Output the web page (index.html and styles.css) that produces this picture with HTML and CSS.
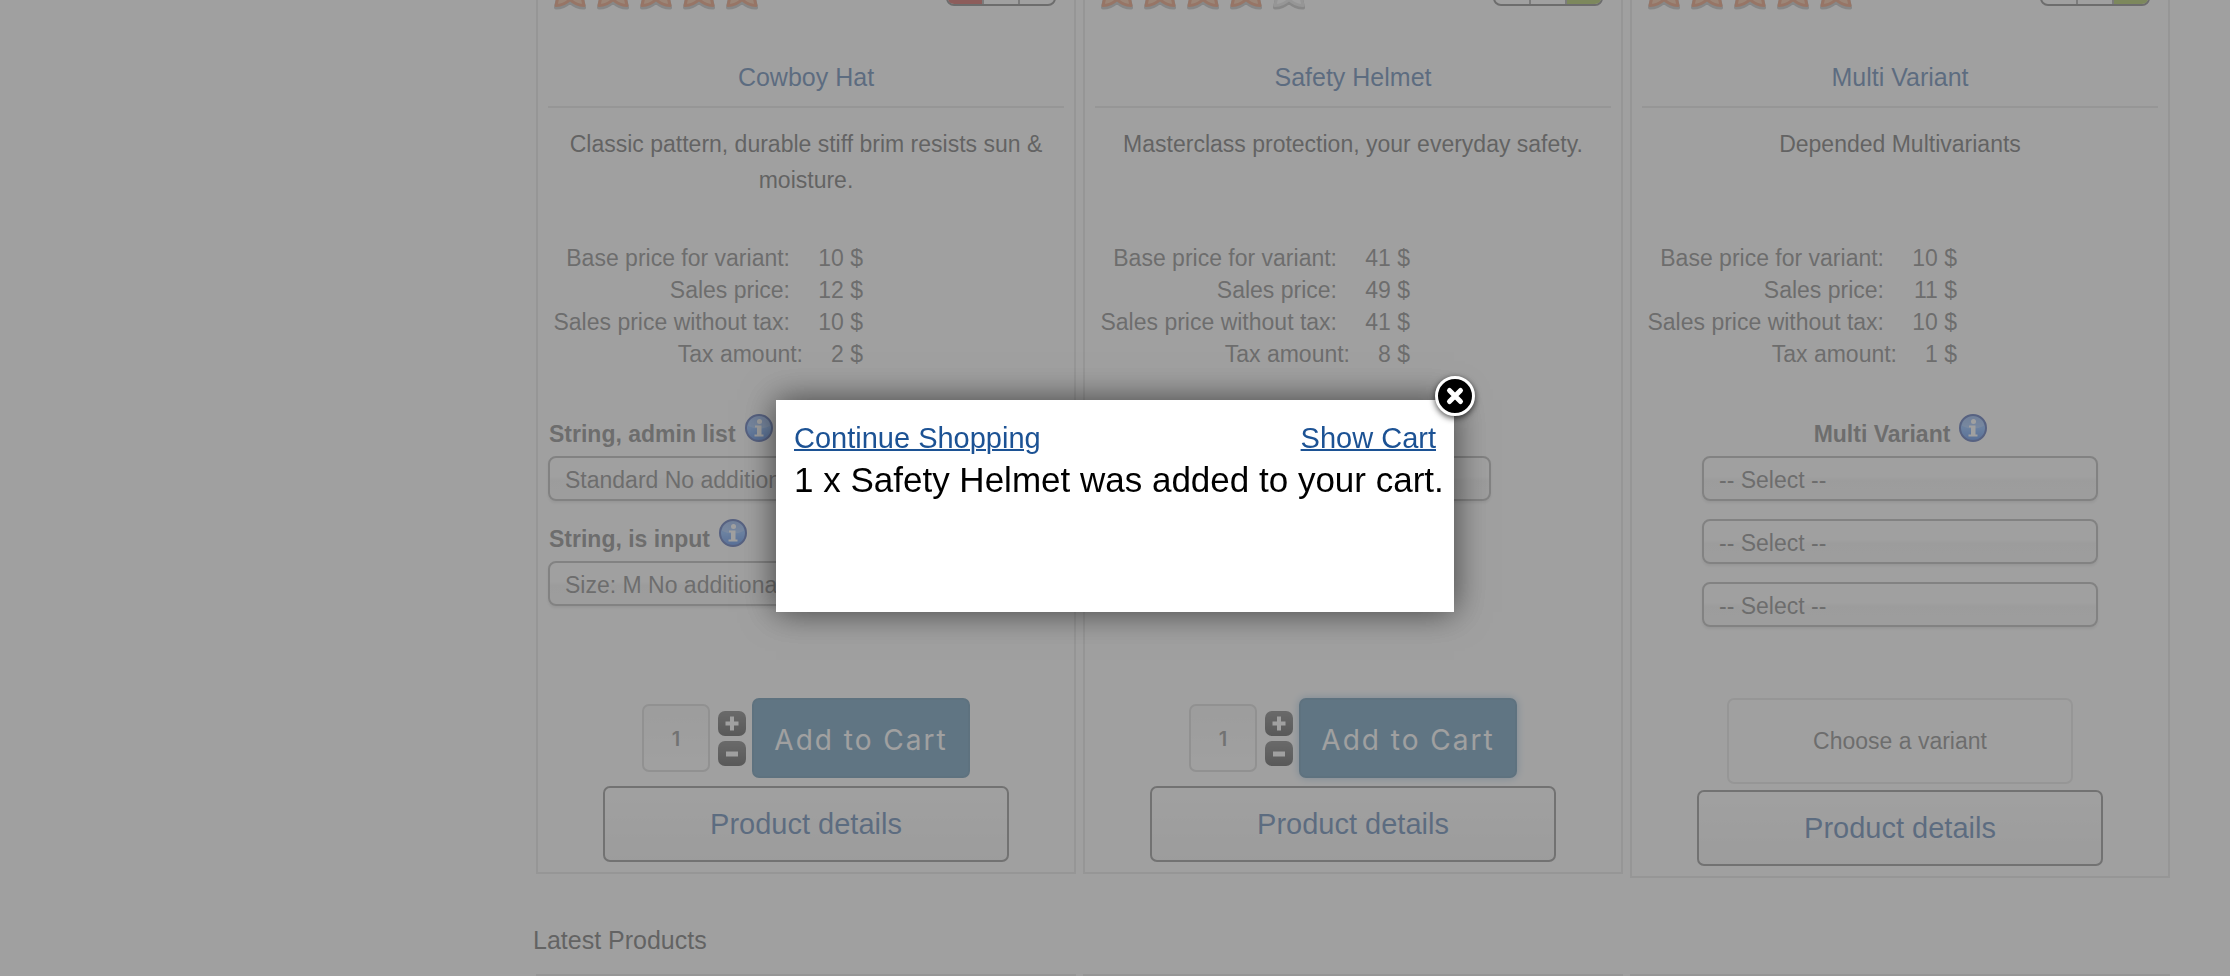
FILE: index.html
```html
<!DOCTYPE html>
<html lang="en">
<head>
<meta charset="utf-8">
<title>Products</title>
<link rel="stylesheet" href="styles.css">
</head>
<body>
<svg class="defs" aria-hidden="true">
  <defs>
    <linearGradient id="info-fill" x1="0" y1="0" x2="0" y2="1">
      <stop offset="0" stop-color="#2f6fe0"/><stop offset=".5" stop-color="#4f98ff"/><stop offset="1" stop-color="#0f5ce0"/>
    </linearGradient>
    <linearGradient id="sq-fill" x1="0" y1="0" x2="0" y2="1">
      <stop offset="0" stop-color="#4a4a4a"/><stop offset="1" stop-color="#111"/>
    </linearGradient>
    <symbol id="info" viewBox="0 0 28 28">
      <circle cx="14" cy="14" r="13" fill="url(#info-fill)" stroke="#0c2f96" stroke-width="2"/>
      <path d="M3 12a11 10 0 0 1 22 0q-11 5-22 0z" fill="#fff" opacity=".25"/>
      <circle cx="14.500" cy="7.500" r="2.500" fill="#fff"/>
      <path d="M10 11.500h6.500v9h2v2h-9v-2h2.500v-7h-2z" fill="#fff"/>
    </symbol>
    <symbol id="star" viewBox="0 0 40 40">
      <path d="M20 4l5 11 12 1.500-6 7 3 14q-8 0-14-6-6 6-14 6l3-14-6-7L15 15z" stroke="#444" stroke-opacity=".45" stroke-width="4" stroke-linejoin="round" fill="none"/>
      <path d="M20 3l5 11 12 1.500-6 7 3 13q-8 0-14-6-6 6-14 6l3-13-6-7L15 14z" stroke-width="3" stroke-linejoin="round"/>
    </symbol>
    <symbol id="plus" viewBox="0 0 28 25">
      <rect width="28" height="25" rx="7" fill="url(#sq-fill)"/>
      <path d="M14 5.500v14M7.500 12.500h13" stroke="#fff" stroke-width="4"/>
    </symbol>
    <symbol id="minus" viewBox="0 0 28 25">
      <rect width="28" height="25" rx="7" fill="url(#sq-fill)"/>
      <path d="M8 13h12" stroke="#fff" stroke-width="5"/>
    </symbol>
  </defs>
</svg>

<main class="page">
  <section class="products">
    <article class="card">
      <div class="status">
        <div class="stars">
          <svg><use href="#star"/></svg><svg><use href="#star"/></svg><svg><use href="#star"/></svg><svg><use href="#star"/></svg><svg><use href="#star"/></svg>
        </div>
        <div class="stock"><i class="low"></i><i></i><i></i></div>
      </div>
      <h2 class="title"><a href="#">Cowboy Hat</a></h2>
      <p class="desc">Classic pattern, durable stiff brim resists sun &amp; moisture.</p>
      <div class="prices">
        <div><span>Base price for variant:</span><b>10 $</b></div>
        <div><span>Sales price:</span><b>12 $</b></div>
        <div><span>Sales price without tax:</span><b>10 $</b></div>
        <div class="tax"><span>Tax amount:</span><b>2 $</b></div>
      </div>
      <div class="fields">
        <div class="label"><label for="admin">String, admin list</label><svg><use href="#info"/></svg></div>
        <select id="admin"><option>Standard No additional charge</option></select>
        <div class="label"><label for="size">String, is input</label><svg><use href="#info"/></svg></div>
        <select id="size"><option>Size: M No additional charge</option></select>
      </div>
      <div class="buy">
        <input class="qty" type="text" value="1" aria-label="Quantity">
        <div class="steps">
          <button type="button" aria-label="More"><svg><use href="#plus"/></svg></button>
          <button type="button" aria-label="Less"><svg><use href="#minus"/></svg></button>
        </div>
        <button class="add" type="button">Add to Cart</button>
      </div>
      <a class="details" href="#">Product details</a>
    </article>

    <article class="card">
      <div class="status">
        <div class="stars">
          <svg><use href="#star"/></svg><svg><use href="#star"/></svg><svg><use href="#star"/></svg><svg><use href="#star"/></svg><svg class="off"><use href="#star"/></svg>
        </div>
        <div class="stock"><i></i><i></i><i class="high"></i></div>
      </div>
      <h2 class="title"><a href="#">Safety Helmet</a></h2>
      <p class="desc">Masterclass protection, your everyday safety.</p>
      <div class="prices">
        <div><span>Base price for variant:</span><b>41 $</b></div>
        <div><span>Sales price:</span><b>49 $</b></div>
        <div><span>Sales price without tax:</span><b>41 $</b></div>
        <div class="tax"><span>Tax amount:</span><b>8 $</b></div>
      </div>
      <div class="fields">
        <div class="label"></div>
        <select aria-label="Variant"><option></option></select>
      </div>
      <div class="buy">
        <input class="qty" type="text" value="1" aria-label="Quantity">
        <div class="steps">
          <button type="button" aria-label="More"><svg><use href="#plus"/></svg></button>
          <button type="button" aria-label="Less"><svg><use href="#minus"/></svg></button>
        </div>
        <button class="add active" type="button">Add to Cart</button>
      </div>
      <a class="details" href="#">Product details</a>
    </article>

    <article class="card">
      <div class="status">
        <div class="stars">
          <svg><use href="#star"/></svg><svg><use href="#star"/></svg><svg><use href="#star"/></svg><svg><use href="#star"/></svg><svg><use href="#star"/></svg>
        </div>
        <div class="stock"><i></i><i></i><i class="high"></i></div>
      </div>
      <h2 class="title"><a href="#">Multi Variant</a></h2>
      <p class="desc">Depended Multivariants</p>
      <div class="prices">
        <div><span>Base price for variant:</span><b>10 $</b></div>
        <div><span>Sales price:</span><b>11 $</b></div>
        <div><span>Sales price without tax:</span><b>10 $</b></div>
        <div class="tax"><span>Tax amount:</span><b>1 $</b></div>
      </div>
      <div class="fields centered">
        <div class="label"><label for="multi">Multi Variant</label><svg><use href="#info"/></svg></div>
        <select id="multi"><option>-- Select --</option></select>
        <select aria-label="Second variant"><option>-- Select --</option></select>
        <select aria-label="Third variant"><option>-- Select --</option></select>
      </div>
      <div class="choose">Choose a variant</div>
      <a class="details" href="#">Product details</a>
    </article>
  </section>

  <h3 class="latest">Latest Products</h3>
  <section class="products">
    <article class="card next"></article>
    <article class="card next"></article>
    <article class="card next"></article>
  </section>
</main>

<div class="overlay">
  <div class="popup" role="dialog" aria-label="Cart">
    <div class="links"><a href="#">Continue Shopping</a><a href="#">Show Cart</a></div>
    <p class="message">1 x Safety Helmet was added to your cart.</p>
    <button class="close" type="button" aria-label="Close">
      <svg viewBox="0 0 44 44">
        <circle cx="22" cy="22" r="18.500" fill="#000" stroke="#fff" stroke-width="3"/>
        <path d="M16.500 16.500l11 11M27.500 16.500l-11 11" stroke="#fff" stroke-width="5" stroke-linecap="round"/>
      </svg>
    </button>
  </div>
</div>
</body>
</html>
```

FILE: styles.css
```css
* { box-sizing: border-box; }
html, body { height: 100%; }
body {
  margin: 0;
  overflow: hidden;
  background: #fff;
  color: #333;
  font: 23px/32px "Liberation Sans", Arial, sans-serif;
}
.defs { position: absolute; width: 0; height: 0; }
a { color: #1c5294; text-decoration: none; }
button { padding: 0; border: 0; background: none; font: inherit; }

.page { padding: 0 60px 0 536px; }
.products {
  display: grid;
  grid-template-columns: repeat(3, 1fr);
  gap: 7px;
  align-items: start;
}
.card {
  display: flex;
  flex-direction: column;
  padding: 0 10px 10px;
  border: 2px solid #ddd;
  border-top: 0;
}

.status {
  display: flex;
  justify-content: space-between;
  align-items: flex-end;
  height: 10px;
  padding: 0 8px 0 2px;
}
.stars { display: flex; gap: 3px; }
.stars svg { width: 40px; height: 40px; fill: #f0a878; stroke: #e0703c; }
.stars .off { fill: #fff; stroke: #ddd; }
.stock {
  display: flex;
  width: 110px;
  height: 30px;
  margin-bottom: 4px;
  border: 2px solid #555;
  border-radius: 8px;
  overflow: hidden;
}
.stock i { flex: 1; border-left: 2px solid #888; }
.stock i:first-child { border-left: 0; }
.stock .low { background: #c0201a; }
.stock .high { background: #8bb020; }

.title {
  margin: 0;
  padding: 49px 0 11px;
  border-bottom: 2px solid #ddd;
  font-size: 25px;
  line-height: 36px;
  font-weight: 400;
  text-align: center;
}
.desc {
  height: 114px;
  margin: 18px 0 0;
  line-height: 36px;
  padding: 0 16px;
  text-align: center;
}
.prices { width: 315px; margin-top: 2px; color: #555; white-space: nowrap; }
.prices div { display: flex; justify-content: flex-end; }
.prices b { width: 73px; font-weight: 400; text-align: right; }
.prices .tax b { width: 60px; }

.fields {
  display: flex;
  flex-direction: column;
  align-items: flex-start;
  height: 328px;
  padding-top: 38px;
  color: #555;
}
.label { display: flex; gap: 9px; height: 48px; padding: 6px 0 0 1px; font-weight: 700; }
.label svg { width: 28px; height: 28px; }
.label label { padding-top: 4px; }
.fields select {
  appearance: none;
  width: 396px;
  height: 45px;
  padding: 2px 15px 0;
  border: 2px solid #999;
  border-radius: 8px;
  background: linear-gradient(#fff 45%, #f2f2f2 55%, #f4f4f4);
  box-shadow: 0 2px 3px #ddd;
  color: #555;
  font: inherit;
}
.fields select + .label { margin-top: 12px; }
.centered { align-items: center; }
.fields select + select { margin-top: 18px; }

.buy { display: flex; justify-content: center; align-items: center; height: 80px; }
.qty {
  width: 68px;
  height: 68px;
  padding-top: 2px;
  border: 2px solid #ccc;
  border-radius: 7px;
  background: linear-gradient(#f4f4f4, #fff);
  color: #666;
  font: 600 20px Inter, sans-serif;
  text-align: center;
}
.steps { display: flex; flex-direction: column; gap: 5px; margin: 0 6px 0 8px; }
.steps button { width: 28px; height: 25px; }
.steps svg { display: block; width: 28px; height: 25px; }
.add {
  width: 218px;
  height: 80px;
  padding-top: 3px;
  border: 2px solid #24658f;
  border-radius: 7px;
  background: #2b709f;
  color: #fff;
  font: 400 28px Inter, sans-serif;
  letter-spacing: 2px;
}
.active { box-shadow: 0 0 8px #7fb0d8; }
.choose {
  align-self: center;
  width: 346px;
  padding: 25px 0;
  border: 2px solid #ddd;
  border-radius: 7px;
  color: #555;
  text-align: center;
}
.choose + .details { margin-top: 6px; }
.details {
  align-self: center;
  width: 406px;
  margin-top: 8px;
  padding: 18px 0;
  border: 2px solid #666;
  border-radius: 7px;
  background: linear-gradient(#fff, #f2f2f2);
  font-size: 29px;
  line-height: 36px;
  text-align: center;
}
.latest { margin: 44px 0 16px -3px; font-size: 25px; line-height: 36px; font-weight: 400; }
.next { height: 40px; border-top: 2px solid #ddd; }

.overlay {
  position: fixed;
  inset: 0;
  display: flex;
  justify-content: center;
  align-items: flex-start;
  padding-top: 400px;
  background: rgba(119, 119, 119, .7);
}
.popup {
  position: relative;
  width: 678px;
  min-height: 212px;
  padding: 20px 18px;
  background: #fff;
  box-shadow: 0 0 32px rgba(0, 0, 0, .6);
  color: #000;
}
.links { display: flex; justify-content: space-between; font-size: 29px; line-height: 36px; }
.links a { text-decoration: underline; text-decoration-thickness: 2px; }
.message { margin: 4px 0 0; font-size: 35px; line-height: 40px; white-space: nowrap; }
.close { position: absolute; top: -26px; right: -23px; width: 44px; height: 44px; }
.close svg { display: block; filter: drop-shadow(0 2px 3px rgba(0, 0, 0, .7)); }
```
